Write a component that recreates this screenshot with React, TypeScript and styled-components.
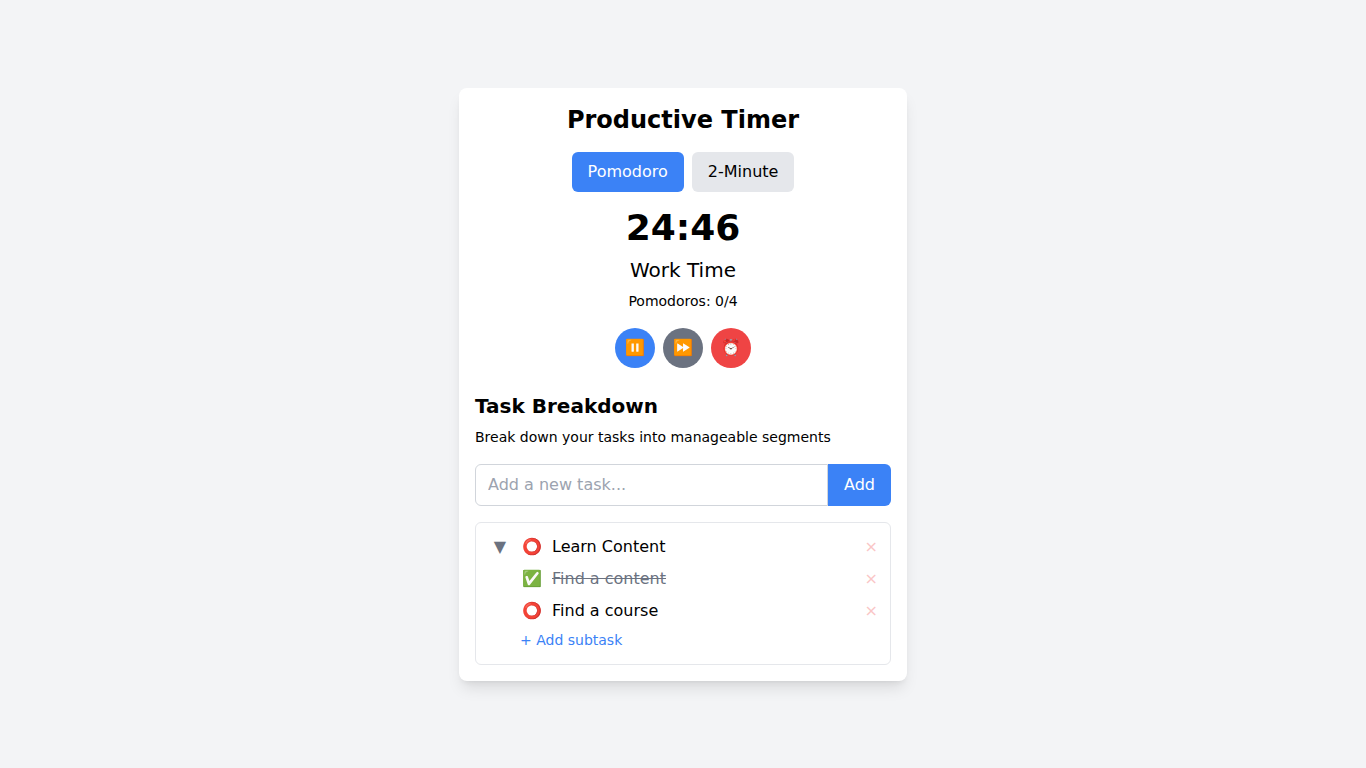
import React, { useState } from 'react';
import styled, { createGlobalStyle } from 'styled-components';

const GlobalStyle = createGlobalStyle`
  *, *::before, *::after { box-sizing: border-box; }
  body {
    margin: 0;
    background: #f3f4f6;
    color: #000;
    font: 16px/24px "DejaVu Sans", "Noto Color Emoji", sans-serif;
  }
  h1, h2, p, ul { margin: 0; padding: 0; }
  ul { list-style: none; }
  button, input { font: inherit; color: inherit; }
  button { border: 0; padding: 0; background: transparent; cursor: pointer; }
`;

const Page = styled.main`
  min-height: 100vh;
  display: flex;
  align-items: center;
  justify-content: center;
`;

const Card = styled.div`
  width: 100%;
  max-width: 448px;
  padding: 16px;
  background: #fff;
  border-radius: 8px;
  box-shadow: 0 10px 15px -3px rgba(0, 0, 0, 0.1), 0 4px 6px -4px rgba(0, 0, 0, 0.1);
`;

const Title = styled.h1`
  margin-bottom: 16px;
  font-size: 24px;
  line-height: 32px;
  font-weight: 700;
  text-align: center;
`;

const ButtonRow = styled.div`
  display: flex;
  justify-content: center;
  gap: 8px;
`;

const ModeButton = styled.button<{ $active: boolean }>`
  padding: 8px 16px;
  border-radius: 6px;
  background: ${(p) => (p.$active ? '#3b82f6' : '#e5e7eb')};
  color: ${(p) => (p.$active ? '#fff' : '#000')};
`;

const Timer = styled.section`
  display: flex;
  flex-direction: column;
  gap: 8px;
  margin: 16px 0;
  text-align: center;
`;

const Clock = styled.p`
  font-size: 36px;
  line-height: 40px;
  font-weight: 700;
`;

const Phase = styled.p`
  font-size: 20px;
  line-height: 28px;
`;

const SmallText = styled.p`
  && { padding-bottom: 2px; }
  font-size: 14px;
  line-height: 18px;
`;

const RoundButton = styled.button<{ $color: string }>`
  width: 40px;
  height: 40px;
  border-radius: 50%;
  background: ${(p) => p.$color};
`;

const Tasks = styled.section`
  margin-top: 24px;
`;

const SectionTitle = styled.h2`
  margin-bottom: 8px;
  font-size: 20px;
  line-height: 28px;
  font-weight: 700;
`;

const TaskForm = styled.form`
  display: flex;
  margin: 16px 0;
`;

const TaskInput = styled.input`
  flex: 1;
  min-width: 0;
  padding: 8px 12px;
  border: 1px solid #d1d5db;
  border-radius: 6px 0 0 6px;
  background: #fff;
  &::placeholder { color: #9ca3af; opacity: 1; }
`;

const AddButton = styled.button`
  padding: 8px 16px;
  border-radius: 0 6px 6px 0;
  background: #3b82f6;
  color: #fff;
`;

const TaskPanel = styled.div`
  padding: 8px 8px 13px;
  border: 1px solid #e5e7eb;
  border-radius: 6px;
`;

const TaskRow = styled.div`
  display: flex;
  align-items: center;
  gap: 8px;
  padding: 4px;
`;

const Subtasks = styled.ul`
  margin-left: 32px;
`;

const IconButton = styled.button`
  width: 24px;
  height: 24px;
  color: #6b7280;
`;

const TaskName = styled.span<{ $done?: boolean }>`
  flex: 1;
  color: ${(p) => (p.$done ? '#6b7280' : '#000')};
  text-decoration: ${(p) => (p.$done ? 'line-through' : 'none')};
`;

const DeleteButton = styled.button`
  color: #ef4444;
  opacity: 0.3;
`;

const AddSubtask = styled.button`
  display: block;
  margin: 4px 0 0 36px;
  padding-bottom: 2px;
  font-size: 14px;
  line-height: 18px;
  color: #3b82f6;
`;

export default function App() {
  const [mode, setMode] = useState('Pomodoro');
  const [open, setOpen] = useState(true);
  const [subtasks, setSubtasks] = useState([
    { name: 'Find a content', done: true },
    { name: 'Find a course', done: false },
  ]);

  const toggle = (name: string) =>
    setSubtasks(subtasks.map((t) => (t.name === name ? { ...t, done: !t.done } : t)));

  return (
    <>
      <GlobalStyle />
      <Page>
        <Card>
          <Title>Productive Timer</Title>
          <ButtonRow>
            {['Pomodoro', '2-Minute'].map((m) => (
              <ModeButton key={m} type="button" $active={m === mode} onClick={() => setMode(m)}>
                {m}
              </ModeButton>
            ))}
          </ButtonRow>
          <Timer>
            <Clock>24:46</Clock>
            <Phase>Work Time</Phase>
            <SmallText>Pomodoros: 0/4</SmallText>
          </Timer>
          <ButtonRow>
            <RoundButton type="button" $color="#3b82f6" aria-label="Pause">⏸️</RoundButton>
            <RoundButton type="button" $color="#6b7280" aria-label="Skip">⏩</RoundButton>
            <RoundButton type="button" $color="#ef4444" aria-label="Reset">⏰</RoundButton>
          </ButtonRow>
          <Tasks>
            <SectionTitle>Task Breakdown</SectionTitle>
            <SmallText>Break down your tasks into manageable segments</SmallText>
            <TaskForm onSubmit={(e) => e.preventDefault()}>
              <TaskInput type="text" aria-label="New task" placeholder="Add a new task..." />
              <AddButton type="submit">Add</AddButton>
            </TaskForm>
            <TaskPanel>
              <TaskRow>
                <IconButton type="button" aria-label="Toggle subtasks" aria-expanded={open} onClick={() => setOpen(!open)}>
                  {open ? '▼' : '▶'}
                </IconButton>
                <IconButton type="button" aria-label="Complete Learn Content">⭕</IconButton>
                <TaskName>Learn Content</TaskName>
                <DeleteButton type="button" aria-label="Delete Learn Content">×</DeleteButton>
              </TaskRow>
              {open && (
                <Subtasks>
                  {subtasks.map((t) => (
                    <li key={t.name}>
                      <TaskRow>
                        <IconButton type="button" aria-label={`Complete ${t.name}`} onClick={() => toggle(t.name)}>
                          {t.done ? '✅' : '⭕'}
                        </IconButton>
                        <TaskName $done={t.done}>{t.name}</TaskName>
                        <DeleteButton type="button" aria-label={`Delete ${t.name}`}>×</DeleteButton>
                      </TaskRow>
                    </li>
                  ))}
                </Subtasks>
              )}
              <AddSubtask type="button">+ Add subtask</AddSubtask>
            </TaskPanel>
          </Tasks>
        </Card>
      </Page>
    </>
  );
}
